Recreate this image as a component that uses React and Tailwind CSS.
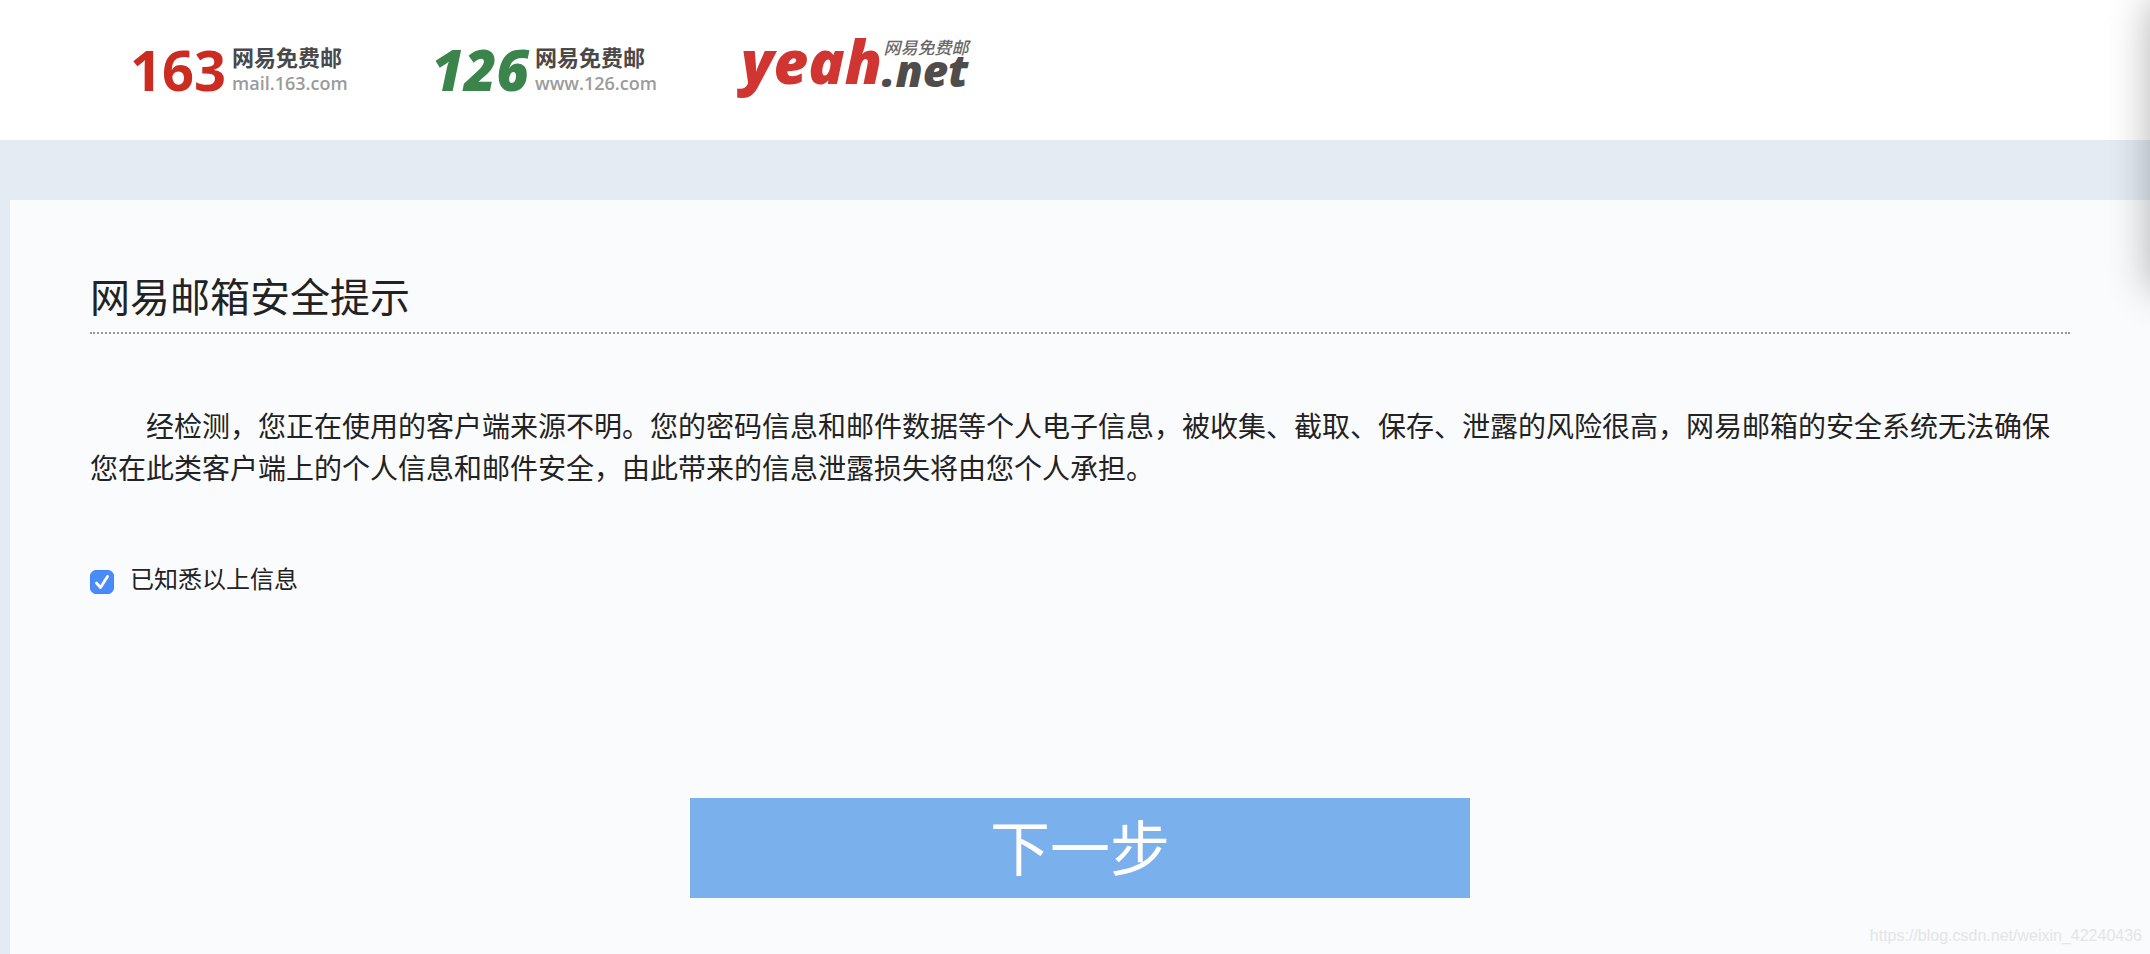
import { useState } from "react";

const NUMBER_LOGOS = [
  {
    name: "163",
    site: "mail.163.com",
    href: "#mail-163",
    className: "font-bold text-[#cb2b20]",
  },
  {
    name: "126",
    site: "www.126.com",
    href: "#mail-126",
    className: "font-extrabold italic text-[#3b844c]",
  },
];

function NumberLogo({ name, site, href, className }) {
  return (
    <a href={href} className="flex items-center gap-1.5">
      <span className={`text-[56px] leading-[54px] font-['Open_Sans','Noto_Sans',sans-serif] ${className}`}>
        {name}
      </span>
      <span className="flex flex-col">
        <span className="text-[22px] leading-[28px] font-bold text-[#4a4848]">网易免费邮</span>
        <span className="text-[18px] leading-[26px] font-semibold text-[#9b9b9b] font-['Open_Sans','Noto_Sans',sans-serif]">
          {site}
        </span>
      </span>
    </a>
  );
}

function YeahLogo() {
  return (
    <a href="#yeah" className="flex items-end pb-4 italic font-extrabold font-['Open_Sans','Noto_Sans_CJK_SC',sans-serif]">
      <span className="text-[60px] leading-[60px] text-[#d03532]">yeah</span>
      <span className="flex flex-col items-end">
        <span className="-mb-2 text-[17px] leading-[18px] font-medium text-[#6a6868]">网易免费邮</span>
        <span className="text-[44px] leading-[42px] text-[#504c4c]">.net</span>
      </span>
    </a>
  );
}

function Checkbox({ id, checked, onChange }) {
  return (
    <span className="grid size-6 shrink-0">
      <input
        id={id}
        type="checkbox"
        checked={checked}
        onChange={(e) => onChange(e.target.checked)}
        className="col-start-1 row-start-1 size-6 appearance-none rounded-md border border-gray-400 bg-white checked:border-[#4485f4] checked:bg-[#4b8bf8]"
      />
      {checked && (
        <svg viewBox="0 0 24 24" className="pointer-events-none col-start-1 row-start-1 size-6" fill="none">
          <path
            d="M6.5 13 L10.5 17.5 L17.5 6.5"
            stroke="white"
            strokeWidth="2.8"
            strokeLinecap="round"
            strokeLinejoin="round"
          />
        </svg>
      )}
    </span>
  );
}

export default function App() {
  const [agreed, setAgreed] = useState(true);

  return (
    <div className="relative flex min-h-screen flex-col overflow-hidden bg-[#e4ebf3] text-[#222] font-['Noto_Sans_CJK_SC',sans-serif]">
      {/* Header */}
      <header className="flex h-[140px] items-center gap-[84px] bg-white pb-0.5 pl-[130px]">
        {NUMBER_LOGOS.map((logo) => (
          <NumberLogo key={logo.name} {...logo} />
        ))}
        <YeahLogo />
      </header>

      {/* Notice */}
      <main className="mt-[60px] ml-2.5 flex flex-1 flex-col bg-[#fafbfd] px-20 pt-[66px] pb-14">
        <h1 className="border-b-2 border-dotted border-[#999] pb-2 text-[40px] leading-[58px]">
          网易邮箱安全提示
        </h1>

        <p className="mt-[70px] indent-14 text-[28px] leading-[42px]">
          经检测，您正在使用的客户端来源不明。您的密码信息和邮件数据等个人电子信息，被收集、截取、保存、泄露的风险很高，网易邮箱的安全系统无法确保您在此类客户端上的个人信息和邮件安全，由此带来的信息泄露损失将由您个人承担。
        </p>

        <div className="mt-[74px] flex items-end gap-4">
          <Checkbox id="agree" checked={agreed} onChange={setAgreed} />
          <label htmlFor="agree" className="text-[24px] leading-8">
            已知悉以上信息
          </label>
        </div>

        <button
          type="button"
          disabled={!agreed}
          className="mt-[204px] h-[100px] w-[780px] max-w-full self-center bg-[#7ab1ed] pb-1.5 text-[60px] leading-none text-white disabled:opacity-50"
        >
          下一步
        </button>
      </main>

      {/* Shadow of the panel that sits off the right edge */}
      <div className="pointer-events-none absolute top-0 left-full h-[290px] w-40 shadow-[0_0_40px_rgba(0,0,0,0.3)]" />

      <span className="pointer-events-none absolute right-2 bottom-1.5 text-[16px] text-[#e4e5e7] font-['Liberation_Sans',sans-serif]">
        https://blog.csdn.net/weixin_42240436
      </span>
    </div>
  );
}
